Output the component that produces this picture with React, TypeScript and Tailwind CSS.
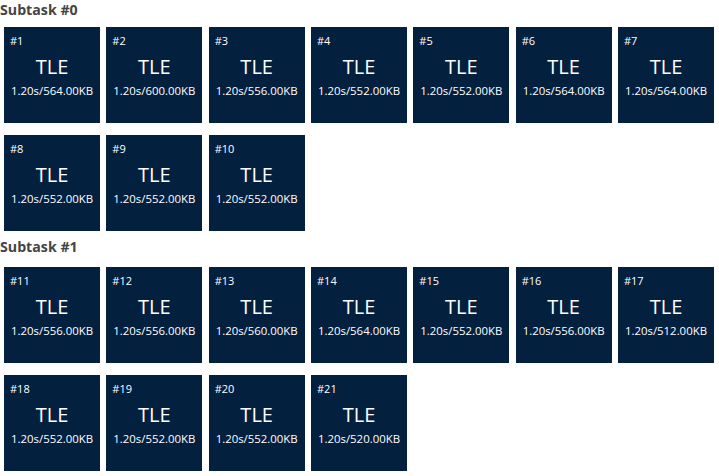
const subtasks = [
  {
    name: "Subtask #0",
    tests: [
      [1, "564.00KB"],
      [2, "600.00KB"],
      [3, "556.00KB"],
      [4, "552.00KB"],
      [5, "552.00KB"],
      [6, "564.00KB"],
      [7, "564.00KB"],
      [8, "552.00KB"],
      [9, "552.00KB"],
      [10, "552.00KB"],
    ],
  },
  {
    name: "Subtask #1",
    tests: [
      [11, "556.00KB"],
      [12, "556.00KB"],
      [13, "560.00KB"],
      [14, "564.00KB"],
      [15, "552.00KB"],
      [16, "556.00KB"],
      [17, "512.00KB"],
      [18, "552.00KB"],
      [19, "552.00KB"],
      [20, "552.00KB"],
      [21, "520.00KB"],
    ],
  },
] as const;

function TestCase({ id, memory }: { id: number; memory: string }) {
  return (
    <div className="flex h-[96px] w-[96px] flex-col bg-[#04203f] text-white">
      <div className="pl-[6px] pt-[5.5px] text-[11px] leading-[15px]">#{id}</div>
      <div className="mt-[7.2px] text-center text-[20px] leading-[24px]">TLE</div>
      <div className="mt-[4.5px] text-center text-[11.4px] leading-[15px]">1.20s/{memory}</div>
    </div>
  );
}

export default function App() {
  return (
    <div className="min-h-[476px] w-[719px] bg-white pt-[2px] font-['Open_Sans',sans-serif]">
      {subtasks.map((subtask, index) => (
        <section key={subtask.name} className={index === 0 ? "" : "mt-[8px]"}>
          <h3 className="text-[14.2px] font-bold leading-[16px] text-[#444]">{subtask.name}</h3>
          <div
            className={`ml-[4px] flex flex-wrap gap-x-[6.33px] gap-y-[12px] ${
              index === 0 ? "mt-[9px]" : "mt-[12px]"
            }`}
          >
            {subtask.tests.map(([id, memory]) => (
              <TestCase key={id} id={id} memory={memory} />
            ))}
          </div>
        </section>
      ))}
    </div>
  );
}
